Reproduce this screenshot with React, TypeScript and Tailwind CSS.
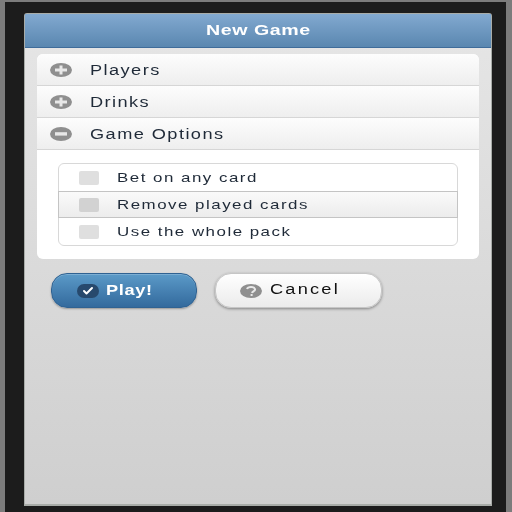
import { Check } from 'lucide-react'

function RoundIcon({ type }: { type: 'plus' | 'minus' | 'help' }) {
  return (
    <svg width="22" height="14" viewBox="0 0 22 14" className="shrink-0 blur-[0.4px]">
      <ellipse cx="11" cy="7" rx="11" ry="7" fill="#8f8f8f" />
      {type === 'plus' && <path d="M5 5.5h4.5V2.5h3v3H17v3h-4.5v3h-3v-3H5z" fill="#e8e8e8" />}
      {type === 'minus' && <rect x="5" y="5.2" width="12" height="3.4" fill="#e8e8e8" />}
      {type === 'help' && (
        <path d="M7 5c1-2.6 7-2.8 8 0 .6 2-2.6 2.4-3 4M10.6 11h2" fill="none" stroke="#e8e8e8" strokeWidth="2" />
      )}
    </svg>
  )
}

function AccordionRow({ label, type }: { label: string; type: 'plus' | 'minus' }) {
  return (
    <div className="flex h-8 items-center gap-[18px] border-b border-[#d6d6d6] bg-gradient-to-b from-[#fdfdfd] to-[#eeeeee] pl-[13px]">
      <RoundIcon type={type} />
      <span className="origin-left scale-x-[1.3] pt-[1px] text-[14px] tracking-[1.1px] text-[#1f2a38] blur-[0.4px]">{label}</span>
    </div>
  )
}

function CheckRow({ label, active }: { label: string; active?: boolean }) {
  return (
    <div
      className={`flex h-[27px] items-center gap-[18px] pl-5 ${
        active ? '-mx-px border border-[#c4c4c4] bg-gradient-to-b from-[#fafafa] to-[#ececec]' : ''
      }`}
    >
      <div className={`h-[14px] w-5 rounded-[2px] ${active ? 'bg-[#d2d2d2]' : 'bg-[#dfdfdf]'}`} />
      <span className="origin-left scale-x-[1.3] text-[13px] tracking-[1.15px] text-[#1f2a38] blur-[0.4px]">{label}</span>
    </div>
  )
}

export default function App() {
  return (
    <div className="h-[512px] w-[512px] overflow-hidden bg-[#1c1c1c] font-['Liberation_Sans',sans-serif]">
      <div className="h-[512px] border-t-2 border-r-[6px] border-l-[5px] border-[#7c7c7c] pt-[11px] pl-[19px]">
        <div className="flex h-[493px] w-[468px] flex-col rounded-t-[3px] border border-b-2 border-[#a8aca8] bg-gradient-to-b from-[#e6e6e6] to-[#cfcfcf]">
          <header className="flex h-[34px] shrink-0 items-center justify-center border-b border-[#3f6c9a] bg-gradient-to-b from-[#82a9d0] to-[#5a87b0]">
            <span className="scale-x-[1.4] text-[14px] font-bold tracking-[0.4px] text-white blur-[0.4px]">New Game</span>
          </header>

          <div className="mx-3 mt-[6px] overflow-hidden rounded-[6px] bg-white">
            <AccordionRow label="Players" type="plus" />
            <AccordionRow label="Drinks" type="plus" />
            <AccordionRow label="Game Options" type="minus" />
            <div className="px-[21px] pt-[13px] pb-[13px]">
              <div className="rounded-[6px] border border-[#d8d8d8] bg-white">
                <CheckRow label="Bet on any card" />
                <CheckRow label="Remove played cards" active />
                <CheckRow label="Use the whole pack" />
              </div>
            </div>
          </div>

          <div className="mt-[14px] ml-[26px] flex gap-[18px]">
            <button className="flex h-[35px] w-[146px] items-center gap-[7px] rounded-[16px] border border-[#2f6292] bg-gradient-to-b from-[#5b9ac8] to-[#336a9d] pl-[25px] shadow-[0_1px_2px_rgba(0,0,0,0.3),inset_0_1px_0_rgba(255,255,255,0.2)]">
              <span className="flex h-[14px] w-[22px] items-center justify-center rounded-full bg-[#27496d]">
                <Check size={12} strokeWidth={4} className="text-white" />
              </span>
              <span className="origin-left scale-x-[1.3] pb-[1px] text-[14px] font-bold tracking-[0.5px] text-white blur-[0.4px]">Play!</span>
            </button>
            <button className="flex h-[35px] w-[167px] items-center gap-[8px] rounded-[16px] border border-[#c6c6c6] bg-gradient-to-b from-white to-[#ebebeb] pl-[24px] shadow-[0_1px_3px_rgba(0,0,0,0.4)]">
              <RoundIcon type="help" />
              <span className="origin-left scale-x-[1.3] pb-[2px] text-[14px] tracking-[1.7px] text-[#111] blur-[0.4px]">Cancel</span>
            </button>
          </div>
        </div>
      </div>
    </div>
  )
}
